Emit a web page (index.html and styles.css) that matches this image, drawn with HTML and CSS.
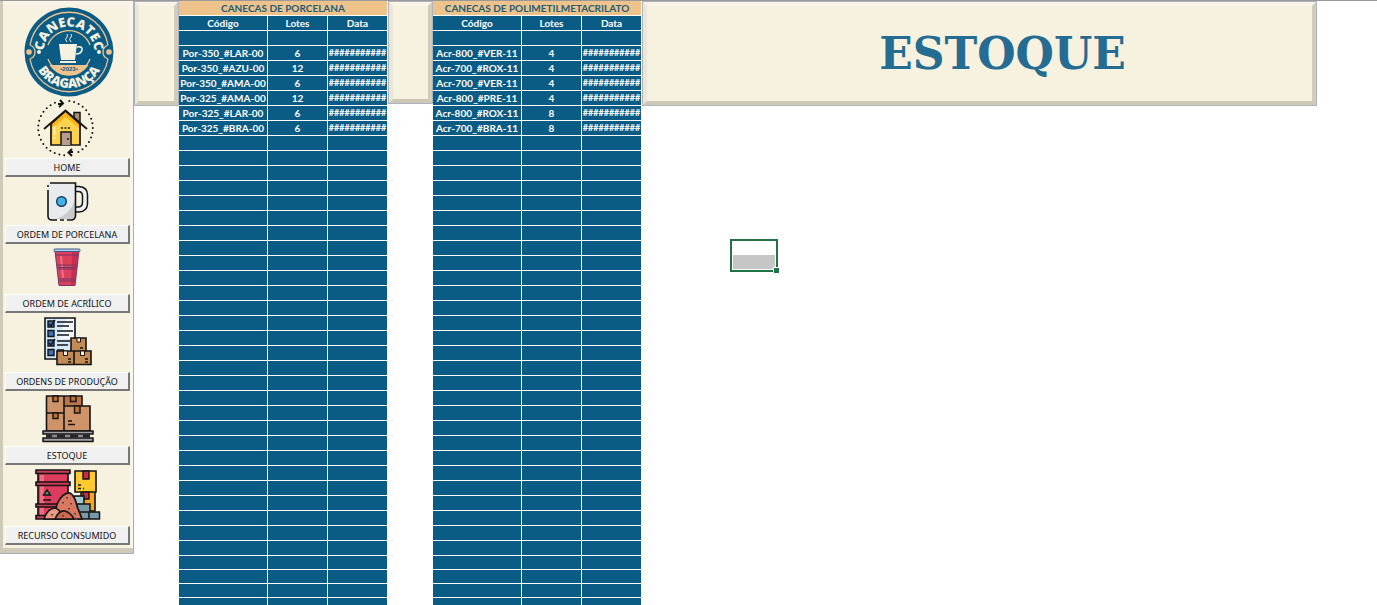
FILE: index.html
```html
<!DOCTYPE html>
<html lang="pt-BR">
<head>
<meta charset="utf-8">
<title>Canecatec Bragança - Estoque</title>
<link rel="stylesheet" href="styles.css">
</head>
<body>
<div class="sheet">
  <aside class="sidebar">
    <svg class="logo" viewBox="0 0 90 90" role="img" aria-label="Canecatec Bragança 2023">
      <defs>
        <path id="arc-top" d="M19.5 45 A25.500 25.500 0 0 1 70.500 45"/>
        <path id="arc-bottom" d="M9 45 A36 36 0 0 0 81 45"/>
      </defs>
      <circle cx="45" cy="45" r="44.500" fill="#0b5c85"/>
      <g fill="none" stroke="#eec38e" stroke-width="1.300">
        <path d="M6 38 A39.600 39.600 0 0 1 84 38 M6 52 A39.600 39.600 0 0 0 84 52"/>
        <path d="M6 38 Q11 40 11 45 Q11 50 6 52 M84 38 Q79 40 79 45 Q79 50 84 52"/>
        <path d="M24 38 A22.500 22.500 0 0 1 66 38 M24 52 A22.500 22.500 0 0 0 66 52"/>
      </g>
      <path d="M25.500 58 H64.500 A23 23 0 0 1 25.500 58Z" fill="#eec38e"/>
      <circle cx="5" cy="45" r="2.800" fill="#eec38e"/><circle cx="85" cy="45" r="2.800" fill="#eec38e"/>
      <circle cx="15" cy="45" r="2" fill="#f7f1df"/><circle cx="75" cy="45" r="2" fill="#f7f1df"/>
      <path d="M35 37 H53 L51 53 H37Z M36 54 H52 V56 H36Z" fill="#f7f1df"/>
      <path d="M53 40 Q59 39 58 43 Q57 47 52 47" fill="none" stroke="#f7f1df" stroke-width="1.600"/>
      <path d="M43 35 Q40 32 43 30 Q44 29 43 27 M47 35 Q44 32 47 30 Q48 29 47 27" fill="none" stroke="#f7f1df"/>
      <text class="logo-name logo-name-top"><textPath href="#arc-top" startOffset="50%">CANECATEC</textPath></text>
      <text class="logo-name logo-name-bottom"><textPath href="#arc-bottom" startOffset="50%">BRAGANÇA</textPath></text>
      <text class="logo-year" x="45" y="64">•2023•</text>
    </svg>
    <nav class="menu">
      <div class="item item-home">
        <svg width="62" height="58" viewBox="0 0 62 58" aria-hidden="true">
          <circle cx="28.500" cy="29" r="27.300" fill="none" stroke="#151515" stroke-width="2" stroke-dasharray="0 4.900" stroke-linecap="round"/>
          <path d="M19 0H29V9H19Z M28 49H38V58H28Z" fill="#f7f1df"/>
          <path d="M21 5H25M23 1L26 4.500L22 8M36 53H32M35 50L31.500 53.500L35 57" fill="none" stroke="#151515" stroke-width="2"/>
          <path d="M37 25V13.500H43V28" fill="#a98c7e" stroke="#151515" stroke-width="1.500"/>
          <path d="M14 26L28.500 13L43 26V46H14Z" fill="#ffd24d" stroke="#151515" stroke-width="1.700"/>
          <path d="M15 25L28.500 13L42 25V29L28.500 18L15 29Z" fill="#fbb216"/>
          <path d="M7 30L28.500 11.500L50 30" fill="none" stroke="#151515" stroke-width="1.800"/>
          <path d="M24 46V33H34V46" fill="#b79b91" stroke="#151515" stroke-width="1.500"/>
          <path d="M31 39V41M24 29H26M27.500 29H29.500M31 29H33" stroke="#151515" stroke-width="1.500"/>
          <path d="M17.500 27V36M17.500 38V40" stroke="#fff4cf" stroke-width="1.700"/>
        </svg>
        <button type="button">HOME</button>
      </div>
      <div class="item item-mug">
        <svg width="42" height="40" viewBox="0 0 42 40" aria-hidden="true">
          <path d="M28 4.500H32Q40.500 5 40.500 13V22Q40 29.500 32 30H28V25H31Q35.500 25 35.500 20V14Q35.500 9.500 31 9.500H28Z" fill="#eef0f3" stroke="#151515" stroke-width="1.500"/>
          <path d="M1 1H28V34Q28 38 24 38H5Q1 38 1 34Z" fill="#e9eaee"/>
          <path d="M27.500 17Q25 31 9 37H24Q28 37 28 33Z" fill="#cbcbce"/>
          <path d="M3 1H28.500V34Q28 38 24 38H20M17 38H13M10 38H5Q1 38 1 34V8M1 5V3" fill="none" stroke="#151515" stroke-width="1.600"/>
          <circle cx="14.500" cy="19.500" r="4.800" fill="#41b1e8" stroke="#173e57" stroke-width="1.500"/>
        </svg>
        <button type="button">ORDEM DE PORCELANA</button>
      </div>
      <div class="item item-cup">
        <svg width="30" height="39" viewBox="0 0 30 39" aria-hidden="true">
          <path d="M2 3H26L22 37.500H6Z" fill="#dc405b" stroke="#713969"/>
          <path d="M19 4H25.500L21.500 37H18Z" fill="#c82f50"/>
          <path d="M8 8L10 30" stroke="#ef7186" stroke-width="2"/>
          <path d="M3 7H25M4 17H24M4.500 19.500H23.500M5 21H23M5.500 31H22.500M6 33H22" stroke="#713969"/>
          <rect x="1" y="1" width="26" height="2.500" rx="1" fill="#a8d2f3" stroke="#405887"/>
        </svg>
        <button type="button">ORDEM DE ACRÍLICO</button>
      </div>
      <div class="item item-orders">
        <svg width="48" height="49" viewBox="0 0 48 49" aria-hidden="true">
          <path d="M1 1H31V42H1Z" fill="#d5e9fb" stroke="#151515" stroke-width="1.600"/>
          <path d="M22 2H30V22H14Z" fill="#f2f8ff"/>
          <g fill="#3d73bd" stroke="#151515" stroke-width="1.400"><path d="M4 4H10V10H4Z M4 13.500H10V19.500H4Z M4 23H10V29H4Z M4 32.500H10V38.500H4Z"/><path d="M5 7L7 9L11 3M5 26L7 28L11 22" fill="none"/></g>
          <path d="M13 5H29M13 9H25M13 14H29M13 18H25M13 24H26M13 28H24M13 33H20" stroke="#151515" stroke-width="1.400"/>
          <g fill="#c48a54" stroke="#151515" stroke-width="1.600"><path d="M27 21H42V34H27Z M13 34H30V47.500H13Z M30 34H47V47.500H30Z"/></g>
          <g fill="#fff0db" stroke="#151515"><path d="M33 21H36.500V25H33Z M19.500 34H23.500V38.500H19.500Z M36.500 34H40.500V38.500H36.500Z"/></g>
          <path d="M36 31H39M24 42H27M24 45H27M41 42H44M41 45H44" stroke="#151515" stroke-width="1.400"/>
        </svg>
        <button type="button">ORDENS DE PRODUÇÃO</button>
      </div>
      <div class="item item-stock">
        <svg width="52" height="48" viewBox="0 0 52 48" aria-hidden="true">
          <g fill="#cf9369" stroke="#151515" stroke-width="1.600"><path d="M4.500 1H22V18H4.500Z M22 1H40V11H22Z M4.500 18H22V36H4.500Z M22 11H48V36H22Z"/></g>
          <path d="M23 2H39V10H23Z" fill="#bd744a"/>
          <g fill="#c17132" stroke="#151515" stroke-width="1.400"><path d="M11 1H16V6.500H11Z M28.500 1H34V6.500H28.500Z M11 18H16V23.500H11Z M32.500 11H38V18H32.500Z"/></g>
          <path d="M26 26H30M26 29.500H33" stroke="#151515" stroke-width="1.500"/>
          <path d="M4 41H48" stroke="#8f8a90" stroke-width="3"/>
          <path d="M1 36H51V39H1Z M1 43H51V46.500H1Z" fill="#a5a0a6" stroke="#151515" stroke-width="1.500"/>
          <path d="M4 41H10M15 41H23M28 41H36M41 41H48" stroke="#24242b" stroke-width="3"/>
        </svg>
        <button type="button">ESTOQUE</button>
      </div>
      <div class="item item-resource">
        <svg width="66" height="52" viewBox="0 0 66 52" aria-hidden="true">
          <path d="M3 4H33V48H3Z" fill="#de3c5c" stroke="#151515" stroke-width="1.700"/>
          <path d="M5 6H9V47H5Z" fill="#f36b7e"/>
          <g fill="#c83b58" stroke="#151515" stroke-width="1.600"><path d="M1 1H35V4.500H1Z M1 13H35V16.500H1Z M1 35H24V38H1Z M1 46.500H34V50H1Z"/></g>
          <path d="M12 21L15.500 26H8.500Z" fill="#24b66e" stroke="#151515" stroke-width="1.400"/><path d="M8 31H16" stroke="#151515" stroke-width="1.500"/>
          <path d="M46 22H60V42H46Z" fill="#f5a528" stroke="#151515" stroke-width="1.600"/>
          <path d="M40 2H61V23H40Z" fill="#ffc92f" stroke="#151515" stroke-width="1.600"/>
          <path d="M48 2H54V10H48Z M48 23H54V30H48Z" fill="#c92b4d" stroke="#151515" stroke-width="1.400"/>
          <path d="M43 16H46M43 19.500H46M48 19.500H49" stroke="#151515" stroke-width="1.400"/>
          <g fill="#7899a7" stroke="#151515" stroke-width="1.500"><path d="M39 27H49V35H39Z M42 35H55V43H42Z M43 43H64.500V50H43Z M54 43V50"/></g>
          <path d="M40 28H48V34H40Z" fill="#a2c8d4"/>
          <path d="M19 50L22 35Q28 23 35 24Q40 27 42 37L47 50Z" fill="#d77961" stroke="#151515" stroke-width="1.700"/>
          <path d="M9 50Q13 39 20 39Q25 40 29 50Z" fill="#e99a85" stroke="#151515" stroke-width="1.600"/>
          <path d="M20 50Q24 41 30 42Q36 44 39 50Z" fill="#cd6950" stroke="#151515" stroke-width="1.600"/>
          <path d="M32 28V29.500M28 33V34.500M36 34V35.500M34 39V40.500M17 45V46.500M28 46V47.500M40 44V45.500" stroke="#4b1e1b" stroke-width="1.500"/>
        </svg>
        <button type="button">RECURSO CONSUMIDO</button>
      </div>
    </nav>
  </aside>
  <div class="panel panel-left"></div>
  <table class="stock">
    <colgroup><col class="col-code"><col class="col-lots"><col class="col-date"></colgroup>
    <thead>
      <tr class="title"><th colspan="3">CANECAS DE PORCELANA</th></tr>
      <tr><th>Código</th><th>Lotes</th><th>Data</th></tr>
    </thead>
    <tbody>
      <tr><td></td><td></td><td></td></tr>
      <tr><td>Por-350_#LAR-00</td><td>6</td><td class="date">###########</td></tr>
      <tr><td>Por-350_#AZU-00</td><td>12</td><td class="date">###########</td></tr>
      <tr><td>Por-350_#AMA-00</td><td>6</td><td class="date">###########</td></tr>
      <tr><td>Por-325_#AMA-00</td><td>12</td><td class="date">###########</td></tr>
      <tr><td>Por-325_#LAR-00</td><td>6</td><td class="date">###########</td></tr>
      <tr><td>Por-325_#BRA-00</td><td>6</td><td class="date">###########</td></tr>
    </tbody>
    <tbody class="blank"></tbody>
  </table>
  <div class="panel panel-middle"></div>
  <table class="stock">
    <colgroup><col class="col-code"><col class="col-lots"><col class="col-date"></colgroup>
    <thead>
      <tr class="title"><th colspan="3">CANECAS DE POLIMETILMETACRILATO</th></tr>
      <tr><th>Código</th><th>Lotes</th><th>Data</th></tr>
    </thead>
    <tbody>
      <tr><td></td><td></td><td></td></tr>
      <tr><td>Acr-800_#VER-11</td><td>4</td><td class="date">###########</td></tr>
      <tr><td>Acr-700_#ROX-11</td><td>4</td><td class="date">###########</td></tr>
      <tr><td>Acr-700_#VER-11</td><td>4</td><td class="date">###########</td></tr>
      <tr><td>Acr-800_#PRE-11</td><td>4</td><td class="date">###########</td></tr>
      <tr><td>Acr-800_#ROX-11</td><td>8</td><td class="date">###########</td></tr>
      <tr><td>Acr-700_#BRA-11</td><td>8</td><td class="date">###########</td></tr>
    </tbody>
    <tbody class="blank"></tbody>
  </table>
  <main class="content">
    <span class="column-mark"></span>
    <header class="panel banner"><h1>ESTOQUE</h1></header>
    <div class="selection"><div class="selection-fill"></div><span class="handle"></span></div>
  </main>
</div>
<script src="rows.js"></script>
</body>
</html>
```
FILE: rows.js
```js
// Fill the unused part of each stock table with empty rows.
document.querySelectorAll('.blank').forEach(function (body) {
  for (var i = 0; i < 32; i++) {
    var row = body.insertRow();
    if (i >= 28) row.className = 'short';
    for (var c = 0; c < 3; c++) row.insertCell();
  }
});
```
FILE: styles.css
```css
* { box-sizing: border-box; }
body { margin: 0; background: #fff; font-family: Lato, "Liberation Sans", sans-serif; }
.sheet { display: flex; align-items: flex-start; height: 100vh; overflow: hidden; border-top: 1px solid #999; }

.sidebar {
  flex: none; width: 134px; padding: 3px 0 8px;
  background: #f7f1df;
  border: 1px solid #a9aeb9; border-width: 0 1px 1px 0;
  box-shadow: inset 3px 0 #cfc9ba, inset 0 -5px #d0cabb, inset -4px 0 #fbf6e9, inset 0 4px #faf3e8;
}
.logo { display: block; width: 90px; height: 90px; margin: 3px auto 0 24px; }
.logo-name { font-family: "Open Sans", sans-serif; font-weight: 800; font-size: 13px; fill: #f7f1df; text-anchor: middle; }
.logo-year { font: bold 6px "Liberation Sans", sans-serif; fill: #0b5c85; text-anchor: middle; }

.menu { display: flex; flex-direction: column; padding-left: 2px; }
.item { display: flex; flex-direction: column; align-items: center; justify-content: space-between; padding-top: 4px; }
.item-home { height: 80px; padding-top: 2px; }
.item-mug { height: 67px; padding-top: 5px; }
.item-cup { height: 69px; }
.item-orders { height: 78px; }
.item-stock { height: 74px; }
.item-resource { height: 80px; }
.item svg { display: block; flex: none; }
.item button {
  width: 125px; height: 19px; padding: 0; white-space: nowrap;
  font: 9px "Noto Sans", sans-serif; color: #111; background: #f0f0f0;
  border: 1px solid #fff; border-right: 2px solid #777; border-bottom: 2px solid #777;
}

.panel {
  flex: none; background: #f7f1df;
  border: 5px solid; border-color: #faf4e8 #d2ccbd #cdc7b7 #ebe6da;
  outline: 1px solid #afb3bb; outline-offset: -1px;
}
.panel-left { width: 45px; height: 105px; }
.panel-middle { width: 45px; height: 103px; }

.stock { flex: none; width: 209px; table-layout: fixed; border-collapse: separate; border-spacing: 0; color: #fff; font-size: 10px; line-height: 14px; }
.col-code { width: 89px; }
.col-lots, .col-date { width: 60px; }
.stock tr { height: 15px; }
.stock .short { height: 14px; }
.stock th, .stock td {
  padding: 0; text-align: center; font-weight: bold; white-space: nowrap;
  background: #0b5c85;
  border-right: 1px solid #fff; border-bottom: 1px solid #fff;
}
.stock .title th { background: #eec28b; color: #1c5d78; }
.stock .date { font-size: 9px; }

.content { position: relative; flex: 1; min-width: 0; padding-right: 60px; }
.column-mark { position: absolute; top: -1px; left: 88px; width: 48px; height: 1px; background: #217346; }
.banner { display: flex; align-items: center; justify-content: center; height: 105px; padding-left: 46px; }
.banner h1 { margin: 0; font: bold 44px "DejaVu Serif", serif; color: #246c91; }
.selection { position: relative; width: 48px; height: 33px; margin: 133px 0 0 88px; padding: 14px 1px 1px; border: 2px solid #217346; }
.selection-fill { height: 100%; background: #c6c6c6; }
.handle { position: absolute; right: -4px; bottom: -4px; width: 7px; height: 7px; background: #217346; border: 1px solid #fff; }
```
